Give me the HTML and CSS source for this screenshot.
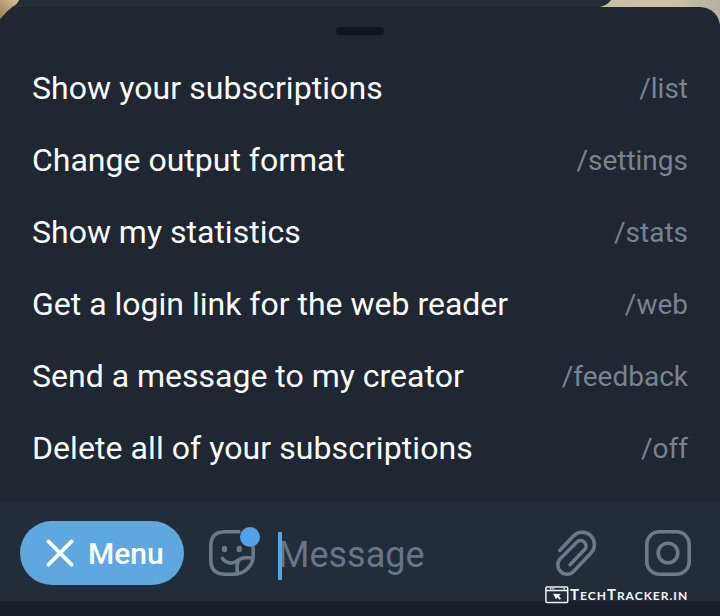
FILE: index.html
```html
<!DOCTYPE html>
<html lang="en">
<head>
<meta charset="utf-8">
<title>Bot menu</title>
<link rel="stylesheet" href="styles.css">
</head>
<body>
<div class="screen">
  <svg class="chat" width="720" height="24" viewBox="0 0 720 24">
    <defs>
      <linearGradient id="sand" x1="0" y1="1" x2="1" y2="0"><stop offset="0" stop-color="#a07a4e"/><stop offset="1" stop-color="#d6c199"/></linearGradient>
      <linearGradient id="paper"><stop offset="0" stop-color="#c5bda4"/><stop offset=".55" stop-color="#cfc4aa"/><stop offset="1" stop-color="#b5b29f"/></linearGradient>
    </defs>
    <rect width="720" height="24" fill="#232e3b"/>
    <path d="M0 0H19Q17 5 12 7L0 19Z" fill="url(#sand)"/>
    <path d="M611 0H720V24H600V7Q608 5 611 0Z" fill="url(#paper)"/>
  </svg>
  <main class="sheet">
    <div class="handle"></div>
    <ul class="commands">
      <li><span class="label plural">Show your subscriptions</span><span class="command">/list</span></li>
      <li><span class="label">Change output format</span><span class="command">/settings</span></li>
      <li><span class="label">Show my statistics</span><span class="command">/stats</span></li>
      <li><span class="label">Get a login link for the web reader</span><span class="command">/web</span></li>
      <li><span class="label">Send a message to my creator</span><span class="command">/feedback</span></li>
      <li><span class="label plural">Delete all of your subscriptions</span><span class="command">/off</span></li>
    </ul>
  </main>
  <footer class="composer">
    <button class="menu">
      <svg width="28" height="28" viewBox="0 0 28 28" fill="none" stroke="#fff" stroke-width="3.8" stroke-linecap="round"><path d="M2.4 2.4 25.6 25.6M25.6 2.4 2.4 25.6"/></svg>
      <span>Menu</span>
    </button>
    <div class="sticker">
      <svg width="48" height="48" viewBox="0 0 48 48" fill="none" stroke="#6b7a8b" stroke-width="3.6" stroke-linecap="round" stroke-linejoin="round">
        <path d="M30 1.8H16Q1.8 1.8 1.8 16V30Q1.8 44.2 16 44.2H25C36 44.2 44.2 35 44.2 26V18"/>
        <path d="M28.2 44V36Q28.2 27.8 36 27.8H44M13.5 28.5C17 33.5 24 34.5 28.5 30.5"/>
        <ellipse cx="15.5" cy="19" rx="2.7" ry="3.3" fill="#6b7a8b" stroke="none"/>
        <ellipse cx="30.3" cy="19" rx="2.7" ry="3.3" fill="#6b7a8b" stroke="none"/>
      </svg>
      <i class="badge"></i>
    </div>
    <div class="field"><i class="caret"></i><span>Message</span></div>
    <svg class="clip" width="42" height="48" viewBox="0 0 42 48" fill="none" stroke="#6b7a8b" stroke-width="3.5" stroke-linecap="round">
      <path d="M3.8 20.5 17.5 6A12 12 0 0 1 35 23L17.5 41.5A9 9 0 0 1 4.5 28.6L20.7 12.2A5.4 5.4 0 0 1 28.4 19.8L14 34.8"/>
    </svg>
    <svg class="camera" width="46" height="46" viewBox="0 0 46 46" fill="none" stroke="#6b7a8b" stroke-width="3.6">
      <rect x="1.8" y="1.8" width="42.4" height="42.4" rx="12.5"/><circle cx="23" cy="23" r="9.8"/>
    </svg>
  </footer>
  <div class="navbar"></div>
  <div class="watermark">
    <svg width="24" height="18" viewBox="0 0 24 18" fill="none" stroke="#eef2f7" stroke-width="1.5">
      <rect x=".9" y=".9" width="21.8" height="15.6" rx="1"/><path d="M1 4.5H23"/><path d="M5 2.7H10M18.5 2.7H20.5" stroke-dasharray="1.4 1"/>
      <path d="M8 7.8 15.8 8 14 10 16 12.8 14.5 13.8 12.6 11.4 11 13.2Z" fill="#eef2f7" stroke="none"/>
    </svg>
    <span class="brand">T<small>ECH</small>T<small>RACKER.IN</small></span>
  </div>
</div>
</body>
</html>
```
FILE: styles.css
```css
* { box-sizing: border-box; }
body { margin: 0; background: #18212b; font-family: Roboto, sans-serif; }
.screen { position: relative; width: 720px; height: 616px; overflow: hidden; display: flex; flex-direction: column; padding-top: 7px; }
.chat { position: absolute; left: 0; top: 0; }
.sheet { position: relative; height: 495px; flex: none; background: #1e2732; border-radius: 20px 20px 0 0; }
.handle { width: 48px; height: 8px; margin: 20px auto 0; border-radius: 4px; background: #10141b; }
.commands { list-style: none; margin: 17px 0 0; padding: 0 32px; }
.commands li { height: 72px; display: flex; align-items: center; justify-content: space-between; white-space: nowrap; }
.label { font-size: 32px; color: #fafcff; }
.plural { letter-spacing: .07px; }
.command { font-size: 28px; color: #778492; }
.composer { position: relative; height: 99px; flex: none; display: flex; align-items: center; padding: 3px 29px 0 20px; background: #222d3a; }
.menu { width: 164px; height: 64px; border: 0; border-radius: 32px; background: #5ea7df; color: #fff; display: flex; align-items: center; padding: 0 0 0 26px; gap: 14px; font: 500 30px Roboto, sans-serif; }
.menu svg { flex: none; }
.sticker { position: relative; width: 48px; height: 48px; margin: 2px 0 0 25px; }
.sticker svg { display: block; }
.badge { position: absolute; left: 31px; top: -3px; width: 20px; height: 20px; border-radius: 50%; background: #50a3e8; }
.field { position: relative; flex: 1; height: 48px; margin: 5px 0 0 21px; display: flex; align-items: center; font-size: 36px; line-height: 44px; color: #66758a; }
.field span { padding-bottom: 1px; }
.caret { position: absolute; left: 0; top: 0; width: 4px; height: 48px; background: #58a5e6; }
.clip { flex: none; margin: 2px 47px 0 0; }
.camera { flex: none; }
.navbar { flex: 1; background: #18212b; }
.watermark { position: absolute; left: 545px; top: 584px; display: flex; align-items: center; color: #f3f6fa; }
.brand { font: 700 15px/20px Lato, sans-serif; letter-spacing: 1px; white-space: nowrap; margin-left: 1px; }
.brand small { font-size: 12px; }
```
